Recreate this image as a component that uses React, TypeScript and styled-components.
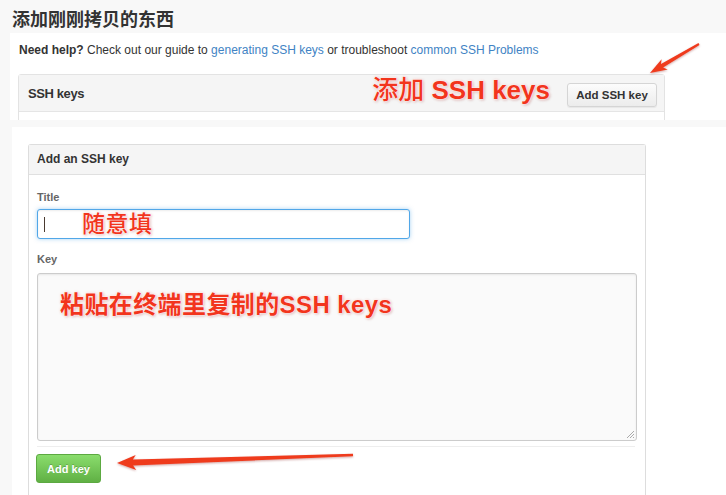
import React from "react";
import styled, { createGlobalStyle } from "styled-components";

const GlobalStyle = createGlobalStyle`
  html, body {
    margin: 0;
    padding: 0;
    background: #f8f8f8;
  }
  * {
    box-sizing: border-box;
  }
`;

const UI_FONT = `"Liberation Sans", Arial, sans-serif`;
const NOTE_FONT = `"Liberation Sans", "Noto Sans CJK SC", sans-serif`;

type Pt = [number, number];

// tapered skitch-style arrow, thin at the tail and wide near the head
function arrowPoints(tail: Pt, tip: Pt, tailW: number, shaftW: number, headLen: number, headW: number) {
  const [x1, y1] = tail;
  const [x2, y2] = tip;
  const len = Math.hypot(x2 - x1, y2 - y1);
  const ux = (x2 - x1) / len;
  const uy = (y2 - y1) / len;
  const nx = -uy;
  const ny = ux;
  const bx = x2 - ux * headLen;
  const by = y2 - uy * headLen;
  const barbX = bx - ux * 3;
  const barbY = by - uy * 3;
  const pts: Pt[] = [
    [x1 + (nx * tailW) / 2, y1 + (ny * tailW) / 2],
    [bx + (nx * shaftW) / 2, by + (ny * shaftW) / 2],
    [barbX + (nx * headW) / 2, barbY + (ny * headW) / 2],
    [x2, y2],
    [barbX - (nx * headW) / 2, barbY - (ny * headW) / 2],
    [bx - (nx * shaftW) / 2, by - (ny * shaftW) / 2],
    [x1 - (nx * tailW) / 2, y1 - (ny * tailW) / 2],
  ];
  return pts.map((p) => `${p[0].toFixed(1)},${p[1].toFixed(1)}`).join(" ");
}

function App() {
  return (
    <>
      <GlobalStyle />
      <Page>
        <Heading>添加刚刚拷贝的东西</Heading>

        <TopShot>
          <Help>
            <strong>Need help?</strong> Check out our guide to <Link>generating SSH keys</Link> or troubleshoot{" "}
            <Link>common SSH Problems</Link>
          </Help>
          <KeysPanel>
            <KeysHeader>
              <KeysTitle>SSH keys</KeysTitle>
              <HeaderNote $size={26}>
                <Light>添加</Light> SSH keys
              </HeaderNote>
              <MinorButton>Add SSH key</MinorButton>
            </KeysHeader>
            <KeysBody />
          </KeysPanel>
        </TopShot>

        <BottomShot>
          <FormPanel>
            <FormHeader>Add an SSH key</FormHeader>
            <FormBody>
              <Label>Title</Label>
              <TitleInput>
                <Caret />
                <InputNote $size={23}>随意填</InputNote>
              </TitleInput>
              <Label $gap={7}>Key</Label>
              <KeyBox>
                <KeyNote $size={24}>粘贴在终端里复制的SSH keys</KeyNote>
                <Grip viewBox="0 0 10 10">
                  <path d="M9 2 L2 9 M9 5 L5 9 M9 8 L8 9" stroke="#aaa" strokeWidth="1" fill="none" />
                </Grip>
              </KeyBox>
              <Divider />
              <Actions>
                <GreenButton>Add key</GreenButton>
              </Actions>
            </FormBody>
          </FormPanel>
        </BottomShot>

        <Overlay viewBox="0 0 726 495">
          <defs>
            <filter id="arrowShadow" x="-10%" y="-50%" width="120%" height="200%">
              <feDropShadow dx="0" dy="1" stdDeviation="1" floodColor="#7a0d00" floodOpacity="0.35" />
            </filter>
          </defs>
          <polygon
            points={arrowPoints([699, 44], [650, 73], 2, 4, 14, 12)}
            fill="#ef3a1f"
            filter="url(#arrowShadow)"
          />
          <polygon
            points={arrowPoints([353, 455], [117, 463], 2.5, 6, 16, 15)}
            fill="#ef3a1f"
            filter="url(#arrowShadow)"
          />
        </Overlay>
      </Page>
    </>
  );
}

export default App;

const Page = styled.div`
  position: relative;
  width: 726px;
  height: 495px;
  overflow: hidden;
  background: #f8f8f8;
  display: flex;
  flex-direction: column;
`;

const Heading = styled.h1`
  margin: 0;
  height: 33px;
  padding: 3px 0 0 12px;
  font-family: "Noto Sans CJK SC", sans-serif;
  font-size: 18px;
  font-weight: 700;
  line-height: 30px;
  color: #333;
`;

const TopShot = styled.section`
  margin-left: 10px;
  height: 87px;
  padding: 9px 0 0 8px;
  background: #fff;
  overflow: hidden;
`;

const Help = styled.p`
  margin: 0 0 16px 1px;
  font-family: ${UI_FONT};
  font-size: 12px;
  line-height: 16px;
  color: #333;
  white-space: nowrap;
`;

const Link = styled.span`
  color: #4183c4;
`;

const KeysPanel = styled.div`
  width: 647px;
  border: 1px solid #e3e3e3;
  border-radius: 3px 3px 0 0;
`;

const KeysHeader = styled.div`
  display: flex;
  align-items: center;
  height: 37px;
  padding: 0 7px 0 9px;
  background: #f5f5f5;
  border-bottom: 1px solid #e5e5e5;
`;

const KeysTitle = styled.h3`
  flex: 1;
  margin: 0;
  font-family: ${UI_FONT};
  font-size: 13px;
  font-weight: 700;
  letter-spacing: -0.4px;
  color: #333;
`;

const KeysBody = styled.div`
  height: 20px;
  background: #fff;
`;

const Note = styled.div<{ $size: number }>`
  font-family: ${NOTE_FONT};
  font-size: ${(p) => p.$size}px;
  font-weight: 700;
  line-height: 30px;
  color: #f2351d;
  white-space: nowrap;
  text-shadow: 0 0 1px #fff, 0 0 2px #fff, 0 0 3px rgba(255, 200, 195, 0.95),
    1px 1px 3px rgba(120, 0, 0, 0.3);
`;

const HeaderNote = styled(Note)`
  margin: 0 17px 6px 0;
`;

const InputNote = styled(Note)`
  margin-left: 37px;
  font-weight: 500;
  letter-spacing: 0.5px;
`;

const KeyNote = styled(Note)`
  letter-spacing: 0.4px;
`;

const Light = styled.span`
  font-weight: 500;
`;

const MinorButton = styled.button`
  width: 90px;
  height: 24px;
  margin-top: 4px;
  padding: 0;
  font-family: ${UI_FONT};
  font-size: 11.5px;
  font-weight: 700;
  color: #333;
  background: linear-gradient(#fcfcfc, #ececec);
  border: 1px solid #d5d5d5;
  border-radius: 3px;
  box-shadow: 0 1px 1px rgba(0, 0, 0, 0.06);
`;

const BottomShot = styled.section`
  flex: 1;
  margin: 7px 0 0 12px;
  padding: 17px 0 0 16px;
  background: #fff;
  display: flex;
`;

const FormPanel = styled.div`
  width: 618px;
  border: 1px solid #dddddd;
  border-bottom: none;
  border-radius: 3px 3px 0 0;
  background: #fff;
`;

const FormHeader = styled.h3`
  margin: 0;
  height: 30px;
  padding-left: 8px;
  font-family: ${UI_FONT};
  font-size: 12px;
  font-weight: 700;
  line-height: 29px;
  color: #333;
  background: #f5f5f5;
  border-bottom: 1px solid #e0e0e0;
`;

const FormBody = styled.div`
  padding: 15px 8px 0;
`;

const Label = styled.div<{ $gap?: number }>`
  margin-bottom: ${(p) => p.$gap ?? 5}px;
  font-family: ${UI_FONT};
  font-size: 11px;
  font-weight: 700;
  line-height: 14px;
  color: #666;
`;

const TitleInput = styled.div`
  display: flex;
  align-items: center;
  width: 373px;
  height: 30px;
  margin-bottom: 13px;
  padding-left: 6px;
  background: #fff;
  border: 1px solid #51a7e8;
  border-radius: 3px;
  box-shadow: inset 0 1px 2px rgba(0, 0, 0, 0.075), 0 0 4px rgba(81, 167, 232, 0.5);
`;

const Caret = styled.span`
  width: 1px;
  height: 15px;
  background: #4a3a30;
`;

const KeyBox = styled.div`
  position: relative;
  width: 600px;
  height: 168px;
  padding: 16px 0 0 22px;
  background: #fafafa;
  border: 1px solid #cccccc;
  border-radius: 3px;
  box-shadow: inset 0 1px 2px rgba(0, 0, 0, 0.075);
`;

const Grip = styled.svg`
  position: absolute;
  right: 1px;
  bottom: 1px;
  width: 10px;
  height: 10px;
`;

const Divider = styled.div`
  width: 598px;
  height: 1px;
  margin-top: 5px;
  background: #eeeeee;
`;

const Actions = styled.div`
  display: flex;
  margin: 7px 0 0 -1px;
`;

const GreenButton = styled.button`
  width: 65px;
  height: 29px;
  padding: 0;
  font-family: ${UI_FONT};
  font-size: 11px;
  font-weight: 700;
  color: #fff;
  text-shadow: 0 -1px 0 rgba(0, 0, 0, 0.2);
  background: linear-gradient(#8add6d, #60b044);
  border: 1px solid #5ca941;
  border-radius: 3px;
`;

const Overlay = styled.svg`
  position: absolute;
  inset: 0;
  width: 726px;
  height: 495px;
  pointer-events: none;
`;
